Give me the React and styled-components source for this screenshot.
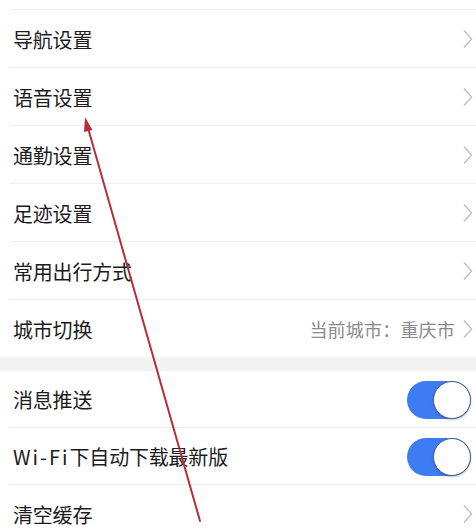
import React from "react";
import styled, { createGlobalStyle } from "styled-components";

const Global = createGlobalStyle`
  html, body { margin: 0; padding: 0; background: #ffffff; }
  body { font-family: "Noto Sans CJK SC", "Noto Sans", sans-serif; }
  * { box-sizing: border-box; }
`;

const Page = styled.div`
  position: relative;
  width: 476px;
  height: 529px;
  overflow: hidden;
  background: #ffffff;
`;

const Group = styled.div`
  display: flex;
  flex-direction: column;
  background: #ffffff;
`;

const Band = styled.div`
  height: 14px;
  background: #f3f3f3;
`;

const Row = styled.div`
  height: ${(p) => p.$h || 58}px;
  padding-left: 10px;
  display: flex;
  background: #ffffff;
`;

const RowInner = styled.div`
  flex: 1;
  display: flex;
  align-items: center;
  padding: 1px 3px 0 3px;
  border-bottom: ${(p) => (p.$last ? "none" : "1px solid #eeeeee")};
`;

const Label = styled.span`
  flex: 1;
  font-size: 20px;
  color: #1c1c1c;
  letter-spacing: -0.2px;
  white-space: nowrap;
`;

const Latin = styled.span`
  letter-spacing: 2px;
`;

const Value = styled.span`
  font-size: 18px;
  color: #8a8a8a;
  margin-right: 8px;
  letter-spacing: 0.2px;
  white-space: nowrap;
`;

const Chevron = () => (
  <svg width="10" height="20" viewBox="0 0 10 20" style={{ flexShrink: 0 }}>
    <path d="M1 1.5 L8.6 10 L1 18.5" fill="none" stroke="#bdbdbd" strokeWidth="1.3" />
  </svg>
);

const Track = styled.div`
  width: 64px;
  height: 38px;
  border-radius: 19px;
  background: #3d7cf2;
  display: flex;
  align-items: center;
  justify-content: flex-end;
  padding: 0;
  margin-right: 2px;
`;

const Knob = styled.div`
  width: 38px;
  height: 38px;
  border-radius: 50%;
  background: #ffffff;
  border: 1.5px solid #4e6189;
  box-shadow: 0 1px 2px rgba(40, 60, 100, 0.35);
`;

const Switch = () => (
  <Track>
    <Knob />
  </Track>
);

const Overlay = styled.svg`
  position: absolute;
  left: 0;
  top: 0;
  pointer-events: none;
`;

const Arrow = () => (
  <Overlay width="476" height="529" viewBox="0 0 476 529">
    <line x1="200" y1="521" x2="88" y2="128" stroke="#b3303a" strokeWidth="2" strokeLinecap="round" />
    <polygon points="85,117 92.5,130 84,132" fill="#b3303a" />
  </Overlay>
);

const navRows = ["导航设置", "语音设置", "通勤设置", "足迹设置", "常用出行方式"];

export default function App() {
  return (
    <Page>
      <Global />
      <Group>
        <Row $h={10}>
          <RowInner />
        </Row>
        {navRows.map((t) => (
          <Row key={t}>
            <RowInner>
              <Label>{t}</Label>
              <Chevron />
            </RowInner>
          </Row>
        ))}
        <Row $h={57}>
          <RowInner $last>
            <Label>城市切换</Label>
            <Value>当前城市：重庆市</Value>
            <Chevron />
          </RowInner>
        </Row>
      </Group>
      <Band />
      <Group>
        <Row $h={57}>
          <RowInner>
            <Label>消息推送</Label>
            <Switch />
          </RowInner>
        </Row>
        <Row $h={57}>
          <RowInner>
            <Label>
              <Latin>Wi-Fi</Latin>下自动下载最新版
            </Label>
            <Switch />
          </RowInner>
        </Row>
        <Row>
          <RowInner>
            <Label>清空缓存</Label>
            <Chevron />
          </RowInner>
        </Row>
      </Group>
      <Arrow />
    </Page>
  );
}
